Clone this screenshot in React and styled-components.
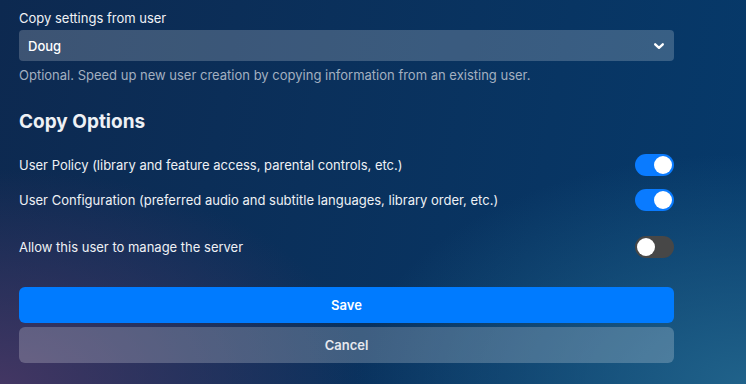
import React, { useState } from 'react'
import styled, { createGlobalStyle } from 'styled-components'

const GlobalStyle = createGlobalStyle`
  html, body {
    margin: 0;
    padding: 0;
  }
  body {
    font-family: Inter, "Noto Sans", sans-serif;
    color: #fff;
  }
`

const Page = styled.div`
  width: 746px;
  height: 384px;
  overflow: hidden;
  box-sizing: border-box;
  padding: 10px 72px 0 19px;
  background:
    radial-gradient(ellipse 70% 80% at 0% 100%, rgba(70, 55, 100, 0.95), rgba(70, 55, 100, 0) 70%),
    radial-gradient(ellipse 70% 80% at 100% 100%, rgba(32, 98, 138, 1), rgba(32, 98, 138, 0) 75%),
    linear-gradient(100deg, #0d2950 0%, #063a6b 100%);
`

const Field = styled.div`
  display: flex;
  flex-direction: column;
`

const Label = styled.label`
  font-size: 13px;
  line-height: 16px;
  color: #f0f2f5;
  margin-bottom: 4px;
`

const SelectBox = styled.div`
  height: 31px;
  border-radius: 4px;
  background: rgba(255, 255, 255, 0.2);
  display: flex;
  align-items: center;
  padding: 0 9px;
  font-size: 13px;
  color: #fff;
  font-weight: 500;
`

const Chevron = styled.svg`
  margin-left: auto;
  width: 12px;
  height: 12px;
`

const Help = styled.div`
  margin-top: 6px;
  font-size: 13px;
  line-height: 16px;
  color: #a3b0c0;
`

const Heading = styled.h2`
  margin: 27px 0 21px;
  font-size: 19px;
  line-height: 23px;
  font-weight: 700;
  color: #eef1f5;
`

const Row = styled.div`
  display: flex;
  align-items: center;
  justify-content: space-between;
  height: 22px;
  margin-bottom: ${p => p.$gap}px;
  font-size: 13px;
  color: #eef1f5;
`

const Track = styled.button`
  position: relative;
  width: 39px;
  height: 22px;
  border: none;
  padding: 0;
  border-radius: 11px;
  background: ${p => (p.$on ? '#0a7bff' : '#474747')};
  cursor: pointer;
  flex-shrink: 0;
`

const Knob = styled.span`
  position: absolute;
  top: 2px;
  left: ${p => (p.$on ? '19px' : '2px')};
  width: 18px;
  height: 18px;
  border-radius: 50%;
  background: #fff;
`

const Buttons = styled.div`
  display: flex;
  flex-direction: column;
  gap: 4px;
  margin-top: 29px;
`

const Button = styled.button`
  height: 36px;
  border: none;
  border-radius: 6px;
  font-family: Inter, "Noto Sans", sans-serif;
  font-size: 13px;
  font-weight: 600;
  color: ${p => (p.$primary ? '#fff' : '#e6e8ee')};
  background: ${p => (p.$primary ? '#007bff' : 'rgba(255, 255, 255, 0.22)')};
  cursor: pointer;
`

function Toggle({ on, onChange }) {
  return (
    <Track $on={on} onClick={() => onChange(!on)}>
      <Knob $on={on} />
    </Track>
  )
}

export default function App() {
  const [policy, setPolicy] = useState(true)
  const [config, setConfig] = useState(true)
  const [admin, setAdmin] = useState(false)

  return (
    <Page>
      <GlobalStyle />
      <Field>
        <Label>Copy settings from user</Label>
        <SelectBox>
          Doug
          <Chevron viewBox="0 0 12 12">
            <path d="M2.2 4.3L6 7.8l3.8-3.5" fill="none" stroke="#fff" strokeWidth="2.4" strokeLinecap="round" strokeLinejoin="round" />
          </Chevron>
        </SelectBox>
        <Help>Optional. Speed up new user creation by copying information from an existing user.</Help>
      </Field>

      <Heading>Copy Options</Heading>

      <Row $gap={13}>
        User Policy (library and feature access, parental controls, etc.)
        <Toggle on={policy} onChange={setPolicy} />
      </Row>
      <Row $gap={25}>
        User Configuration (preferred audio and subtitle languages, library order, etc.)
        <Toggle on={config} onChange={setConfig} />
      </Row>
      <Row $gap={0}>
        Allow this user to manage the server
        <Toggle on={admin} onChange={setAdmin} />
      </Row>

      <Buttons>
        <Button $primary>Save</Button>
        <Button>Cancel</Button>
      </Buttons>
    </Page>
  )
}
